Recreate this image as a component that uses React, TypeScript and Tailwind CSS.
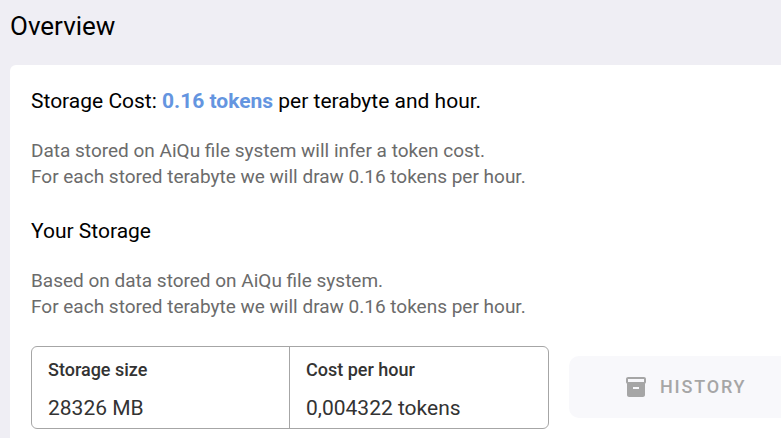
import React from 'react'
import { MdInventory2 } from 'react-icons/md'

interface InfoSectionProps {
  title: React.ReactNode
  lines: string[]
}

const usage = [
  { label: 'Storage size', value: '28326 MB' },
  { label: 'Cost per hour', value: '0,004322 tokens' }
]

function InfoSection({ title, lines }: InfoSectionProps) {
  return (
    <section>
      <h2 className="text-[21px] leading-8 text-black">{title}</h2>
      <p className="mt-[21px] text-[19px] leading-[26px] text-[#6b6b6b]">
        {lines.map(line => (
          <span key={line} className="block">{line}</span>
        ))}
      </p>
    </section>
  )
}

export default function App() {
  return (
    <div className="min-h-screen overflow-hidden bg-[#efeef4] pl-2.5 font-['Roboto',sans-serif]">
      <h1 className="pt-2 text-[26px] leading-9 text-black">Overview</h1>

      <main className="mt-[21px] rounded-tl-md bg-white pt-5 pl-[21px] pb-5">
        <div className="flex flex-col gap-[25px]">
          <InfoSection
            title={
              <>
                Storage Cost: <strong className="font-bold text-[#6495e0]">0.16 tokens</strong> per terabyte and hour.
              </>
            }
            lines={[
              'Data stored on AiQu file system will infer a token cost.',
              'For each stored terabyte we will draw 0.16 tokens per hour.'
            ]}
          />
          <InfoSection
            title="Your Storage"
            lines={[
              'Based on data stored on AiQu file system.',
              'For each stored terabyte we will draw 0.16 tokens per hour.'
            ]}
          />
        </div>

        {/* Current usage */}
        <div className="mt-[26px] flex items-start gap-5">
          <dl className="grid w-[70%] max-w-[518px] shrink-0 grid-cols-2 divide-x divide-[#a6a6a6] rounded-md border border-[#a6a6a6]">
            {usage.map(item => (
              <div key={item.label} className="flex flex-col gap-2 px-4 pt-2 pb-[5px]">
                <dt className="text-lg leading-[30px] font-medium text-[#333333]">{item.label}</dt>
                <dd className="text-[21px] leading-[30px] text-[#333333]">{item.value}</dd>
              </div>
            ))}
          </dl>
          <button
            type="button"
            disabled
            className="mt-2.5 flex h-[62px] min-w-0 flex-1 items-center gap-3 rounded-l-[10px] bg-[#f8f8fb] pl-[55px] text-lg font-medium tracking-widest text-[#a6a6a6] uppercase"
          >
            <MdInventory2 className="h-6 w-6 shrink-0" />
            History
          </button>
        </div>
      </main>
    </div>
  )
}
